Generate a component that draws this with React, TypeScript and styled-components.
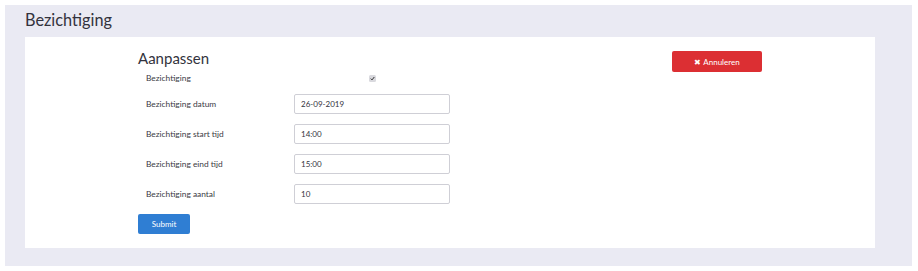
import React from "react";
import styled, { createGlobalStyle } from "styled-components";

const Global = createGlobalStyle`
  html, body { margin: 0; padding: 0; background: #ffffff; }
  body { font-family: Lato, "Noto Sans", "Liberation Sans", sans-serif; color: #3a3a44; }
  * { box-sizing: border-box; }
`;

const Page = styled.div`
  padding: 5px 6px 5px 5px;
`;

const Panel = styled.div`
  background: #eaeaf3;
  padding: 0 37px 18px 20px;
  height: 261px;
  display: flex;
  flex-direction: column;
`;

const PageTitle = styled.h1`
  margin: 0;
  height: 32px;
  font-size: 16.3px;
  font-weight: 400;
  line-height: 30px;
  color: #33333d;
`;

const Card = styled.div`
  background: #ffffff;
  flex: 1;
  padding: 12px 113px 14px 113px;
  display: flex;
  justify-content: space-between;
  align-items: flex-start;
`;

const FormCol = styled.form`
  width: 320px;
  display: flex;
  flex-direction: column;
`;

const Heading = styled.h2`
  margin: 0;
  font-size: 15px;
  line-height: 18px;
  font-weight: 400;
  color: #33333d;
`;

const Row = styled.div<{ $gap: number }>`
  display: flex;
  align-items: center;
  height: 20px;
  margin-top: ${(p) => p.$gap}px;
`;

const Label = styled.label`
  width: 156px;
  padding-left: 8px;
  font-size: 8.4px;
  color: #3a3a44;
`;

const Field = styled.div`
  width: 156px;
  display: flex;
  justify-content: center;
`;

const Input = styled.input`
  width: 156px;
  height: 20px;
  border: 1px solid #cfcfd6;
  border-radius: 2px;
  padding: 0 6px;
  font-family: inherit;
  font-size: 8px;
  color: #33333d;
  outline: none;
`;

const Check = styled.span`
  width: 7px;
  height: 7px;
  border-radius: 1.5px;
  background: #d9d9de;
  display: flex;
  align-items: center;
  justify-content: center;
`;

const SubmitButton = styled.button`
  margin-top: 10px;
  width: 52px;
  height: 20px;
  border: none;
  border-radius: 2px;
  background: #2f7ed3;
  color: #ffffff;
  font-family: inherit;
  font-size: 8px;
  padding: 0;
`;

const CancelButton = styled.button`
  margin-top: 2px;
  width: 90px;
  height: 21px;
  border: none;
  border-radius: 2px;
  background: #dc2f33;
  color: #ffffff;
  font-family: inherit;
  font-size: 8px;
  padding: 0;
  display: flex;
  align-items: center;
  justify-content: center;
  gap: 2px;
`;

const rows = [
  { label: "Bezichtiging datum", value: "26-09-2019", gap: 6 },
  { label: "Bezichtiging start tijd", value: "14:00", gap: 10 },
  { label: "Bezichtiging eind tijd", value: "15:00", gap: 10 },
  { label: "Bezichtiging aantal", value: "10", gap: 10 },
];

export default function App() {
  return (
    <>
      <Global />
      <Page>
        <Panel>
          <PageTitle>Bezichtiging</PageTitle>
          <Card>
            <FormCol onSubmit={(e) => e.preventDefault()}>
              <Heading>Aanpassen</Heading>
              <Row $gap={1}>
                <Label>Bezichtiging</Label>
                <Field>
                  <Check>
                    <svg width="5" height="5" viewBox="0 0 10 10">
                      <path d="M1.5 5.2 L4 7.8 L8.6 2" fill="none" stroke="#333" strokeWidth="2" />
                    </svg>
                  </Check>
                </Field>
              </Row>
              {rows.map((r) => (
                <Row key={r.label} $gap={r.gap}>
                  <Label>{r.label}</Label>
                  <Input defaultValue={r.value} />
                </Row>
              ))}
              <SubmitButton type="submit">Submit</SubmitButton>
            </FormCol>
            <CancelButton type="button">
              <span>✖</span>
              <span>Annuleren</span>
            </CancelButton>
          </Card>
        </Panel>
      </Page>
    </>
  );
}
